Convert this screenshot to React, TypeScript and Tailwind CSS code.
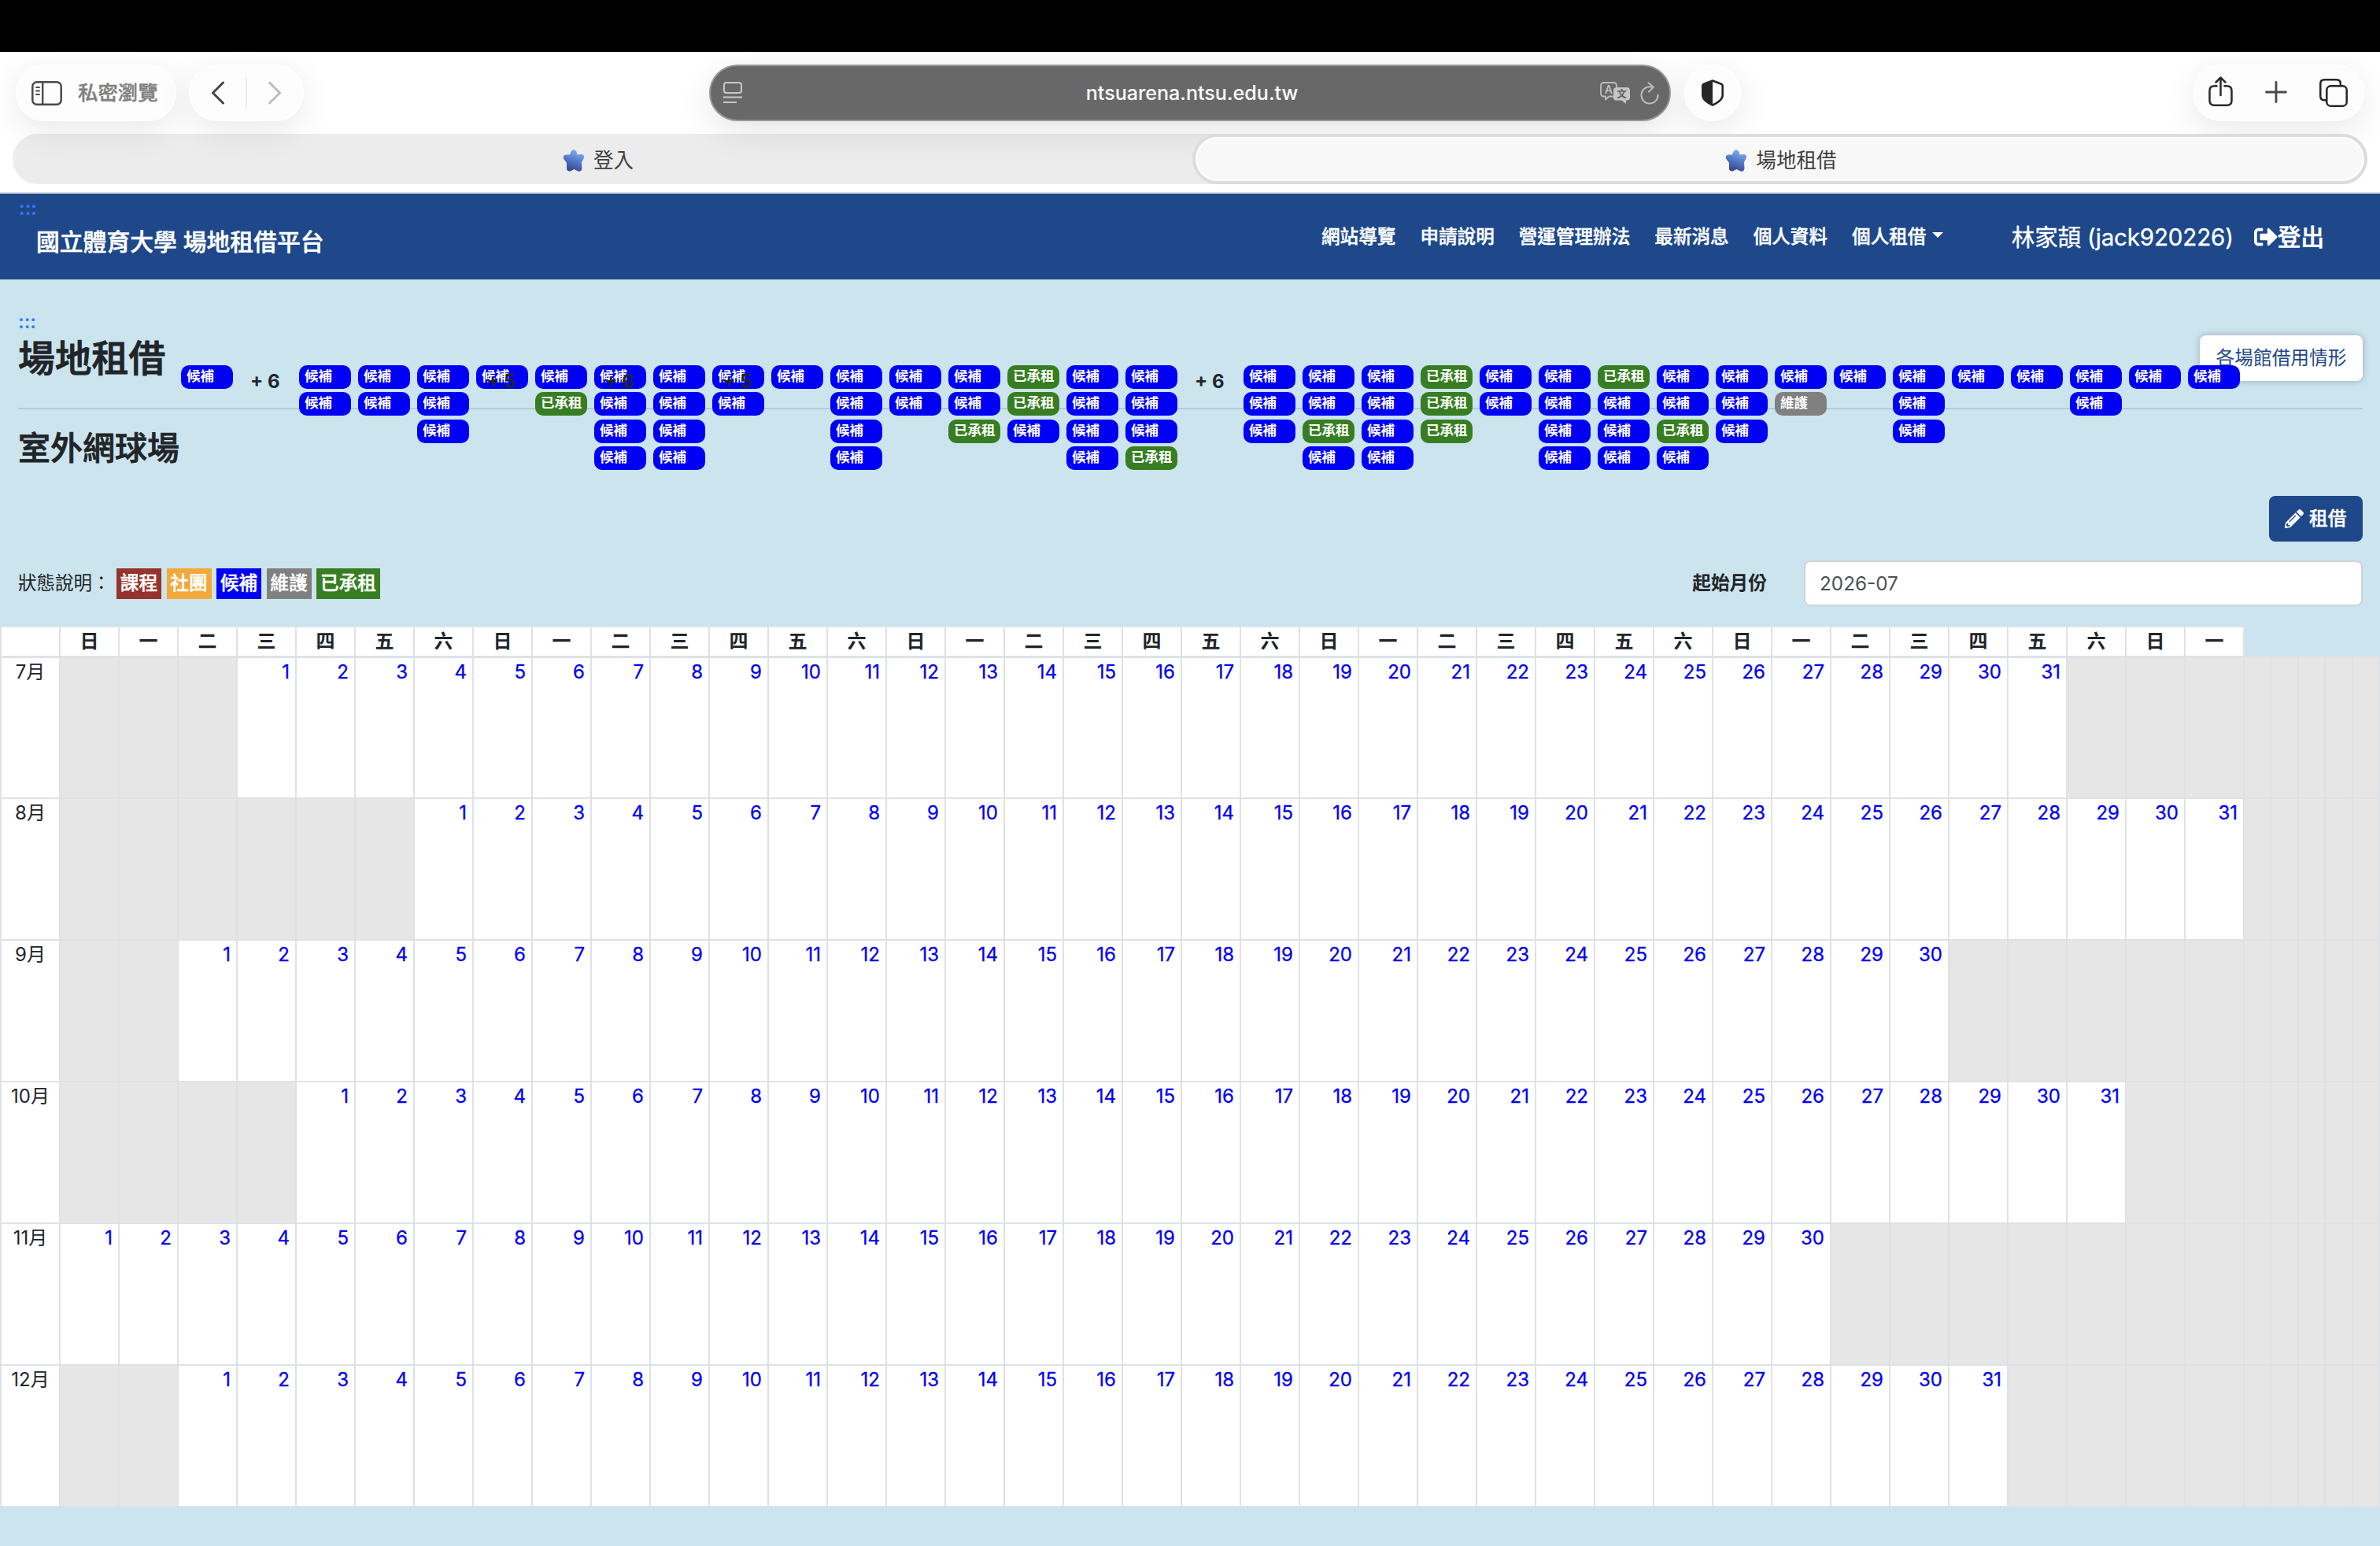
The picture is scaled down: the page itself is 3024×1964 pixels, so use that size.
import React from "react";
import { FaPencilAlt, FaSignOutAlt } from "react-icons/fa";

const WEEKDAYS = ["日", "一", "二", "三", "四", "五", "六"];
const DAY_COLUMNS = 37;

const MONTHS = [
  { label: "7月", offset: 3, days: 31 },
  { label: "8月", offset: 6, days: 31 },
  { label: "9月", offset: 2, days: 30 },
  { label: "10月", offset: 4, days: 31 },
  { label: "11月", offset: 0, days: 30 },
  { label: "12月", offset: 2, days: 31 },
];

type Kind = "w" | "r" | "m";

const EVENT_STYLE: Record<Kind, { text: string; className: string }> = {
  w: { text: "候補", className: "bg-[#0000f5]" },
  r: { text: "已承租", className: "bg-[#377e22]" },
  m: { text: "維護", className: "bg-[#808080]" },
};

const EVENTS: { items: string; more?: string }[] = [
  { items: "w" },
  { items: "", more: "+ 6" },
  { items: "ww" },
  { items: "ww" },
  { items: "www" },
  { items: "w", more: "+ 5" },
  { items: "wr" },
  { items: "wwww", more: "+ 6" },
  { items: "wwww" },
  { items: "ww", more: "+ 5" },
  { items: "w" },
  { items: "wwww" },
  { items: "ww" },
  { items: "wwr" },
  { items: "rrw" },
  { items: "wwww" },
  { items: "wwwr" },
  { items: "", more: "+ 6" },
  { items: "www" },
  { items: "wwrw" },
  { items: "wwww" },
  { items: "rrr" },
  { items: "ww" },
  { items: "wwww" },
  { items: "rwww" },
  { items: "wwrw" },
  { items: "www" },
  { items: "wm" },
  { items: "w" },
  { items: "www" },
  { items: "w" },
  { items: "w" },
  { items: "ww" },
  { items: "w" },
  { items: "w" },
];

const LEGEND = [
  { text: "課程", className: "w-[57px] bg-[#96332c]" },
  { text: "社團", className: "w-[57px] bg-[#f2a93b]" },
  { text: "候補", className: "w-[57px] bg-[#0000f5]" },
  { text: "維護", className: "w-[57px] bg-[#808080]" },
  { text: "已承租", className: "w-[81px] bg-[#377e22]" },
];

const PILL =
  "flex h-[72px] items-center rounded-full bg-[#fdfdfd] shadow-[0_12px_44px_rgba(0,0,0,0.09),inset_0_0_0_2px_#ffffff]";

function Star() {
  return (
    <svg width="28" height="28" viewBox="0 0 28 28">
      <defs>
        <linearGradient id="star" x1="0.7" y1="0" x2="0.35" y2="1">
          <stop offset="0" stopColor="#86b2f0" />
          <stop offset="0.45" stopColor="#5a7fcb" />
          <stop offset="1" stopColor="#34448f" />
        </linearGradient>
      </defs>
      <path
        d="M10.500 2.500q3.500-4.500 7 0l1 4 5.500-.5q4.500 1 2.500 5.500l-2.500 4.500.5 8q-.5 4.500-5 3.500l-5-2.500-5 2.500q-4.500.5-4.500-4l0-6.500-4-5.500q-1-4.500 3.500-5l4.500 0z"
        fill="url(#star)"
      />
    </svg>
  );
}

function Toolbar() {
  return (
    <div className="flex h-[104px] items-start pt-4 pl-5 pr-5">
      <div className={`${PILL} w-[204px] pl-5`}>
        <svg width="39" height="31" viewBox="0 0 39 31" fill="none" stroke="#4a4a4a">
          <rect x="1.3" y="1.3" width="36.4" height="28.4" rx="5.5" strokeWidth="2.5" />
          <path d="M14.2 1v29" strokeWidth="2.4" />
          <path d="M6 8h4M6 12.5h4M6 17h4" strokeWidth="1.8" strokeLinecap="round" />
        </svg>
        <span className="ml-5 text-[25.4px] font-medium leading-8 text-[#7f7f7f] [-webkit-text-stroke:0.4px]">私密瀏覽</span>
      </div>
      <div className={`${PILL} ml-4 w-[146px] pl-[28px]`}>
        <svg width="18" height="30" viewBox="0 0 18 30" fill="none" stroke="#454545" strokeWidth="3" strokeLinecap="round" strokeLinejoin="round">
          <path d="M15.5 2 2.5 15l13 13" />
        </svg>
        <span className="ml-[26px] h-10 w-[2px] bg-[#ececec]" />
        <svg className="ml-[26px]" width="18" height="30" viewBox="0 0 18 30" fill="none" stroke="#bcbcbc" strokeWidth="3" strokeLinecap="round" strokeLinejoin="round">
          <path d="M2.5 2l13 13-13 13" />
        </svg>
      </div>
      <div className="ml-[515px] flex h-[72px] w-[1222px] items-center rounded-full border-2 border-[#989898] bg-[#686868] pl-4 pr-[13px] shadow-[0_12px_44px_rgba(0,0,0,0.1)]">
        <svg width="24" height="28" viewBox="0 0 24 28" fill="none" stroke="#c9c9c9" strokeWidth="2">
          <rect x="1" y="1" width="22" height="13" rx="3" />
          <path d="M0 19.5h24M0 26h17" />
        </svg>
        <span className="flex-1 pl-[53px] text-center text-[25.1px] font-medium leading-8 text-white">
          ntsuarena.ntsu.edu.tw
        </span>
        <svg width="39" height="28" viewBox="0 0 39 28">
          <path
            d="M17 18.5h-5.5L7 22.5v-4H5q-4 0-4-4V5q0-4 4-4h12q4 0 4 4v2"
            fill="none"
            stroke="#bdbdbd"
            strokeWidth="1.8"
            strokeLinejoin="round"
          />
          <path d="M21 7h13q4 0 4 4v9q0 3.500-4 3.500h-1V28l-5.500-4.500H21q-4 0-4-3.500v-9q0-4 4-4z" fill="#c6c6c6" />
          <text x="11" y="14.800" fontSize="14" fontWeight="500" textAnchor="middle" fill="#c9c9c9">A</text>
          <text x="27.600" y="20" fontSize="12.500" fontWeight="700" textAnchor="middle" fill="#5c5c5c">文</text>
        </svg>
        <svg className="ml-3" width="24" height="29" viewBox="0 0 24 29" fill="none" stroke="#bdbdbd" strokeWidth="2" strokeLinecap="round" strokeLinejoin="round">
          <path d="M14 6.500A10.600 10.600 0 1 0 22.600 16.500" />
          <path d="M10.500 1.200l6.300 5.600-5.800 5.800" />
        </svg>
      </div>
      <div className={`${PILL} ml-[17px] w-[72px] justify-center`}>
        <svg width="28" height="34" viewBox="0 0 28 34">
          <path
            d="M14 1.500 3.500 5.500Q1.300 6.300 1.300 8.500V19q0 5 4 8.300 3.700 3.200 8.700 5.200 5-2 8.700-5.200 4-3.300 4-8.300V8.500q0-2.200-2.200-3z"
            fill="none"
            stroke="#262626"
            strokeWidth="2.600"
            strokeLinejoin="round"
          />
          <path d="M14 1.500 3.500 5.500Q1.300 6.300 1.300 8.500V19q0 5 4 8.300 3.700 3.200 8.700 5.200z" fill="#262626" />
        </svg>
      </div>
      <div className={`${PILL} ml-auto w-[218px] pl-[20px]`}>
        <svg className="-mt-[3px]" width="31" height="39" viewBox="0 0 31 39" fill="none" stroke="#2b2b2b" strokeWidth="2.500" strokeLinecap="round" strokeLinejoin="round">
          <path d="M10.500 12.300H7.500q-6 0-6 6v12.500q0 6 6 6h16q6 0 6-6V18.300q0-6-6-6h-3" />
          <path d="M15.500 24V2M9.500 7.500l6-6 6 6" />
        </svg>
        <svg className="ml-[41px] -mt-[2px]" width="28" height="28" viewBox="0 0 28 28" stroke="#4a4a4a" strokeWidth="2.800" strokeLinecap="round">
          <path d="M14 1.500v25M1.500 14h25" />
        </svg>
        <svg className="ml-[41px] -mt-[1px]" width="36" height="36" viewBox="0 0 36 36" fill="none" stroke="#262626" strokeWidth="2.500">
          <path d="M9 27.200H6.300q-5 0-5-5V6.300q0-5 5-5h15.500q5 0 5 5V9" />
          <rect x="9.300" y="9.300" width="25.400" height="25.400" rx="5" />
        </svg>
      </div>
    </div>
  );
}

function TabBar() {
  return (
    <div className="relative mx-4 flex h-[64px] rounded-full bg-black/[0.075] text-[25.600px] leading-8 text-[#3f3f3f]">
      <div className="flex w-[1499px] items-center justify-center gap-[11px] pr-[11px] pt-[4px]">
        <Star />
        <span>登入</span>
      </div>
      <div className="flex flex-1 items-center justify-center gap-[11px] rounded-full border-4 border-[#dcdcdc] bg-[#f8f8f8] pl-[3px] pt-[4px] shadow-[inset_0_0_0_2px_#ffffff]">
        <Star />
        <span>場地租借</span>
      </div>
    </div>
  );
}

function SiteHeader() {
  return (
    <header className="h-[109px] bg-[#1e488a] text-white">
      <div className="flex h-full pr-[71px]">
        <div className="w-[1679px]">
          <div className="h-[38px] pl-6 text-[24px] font-semibold leading-[38px] text-[#2f7dfa]">:::</div>
          <div className="pl-[46px] text-[29.800px] font-medium leading-[46px] [-webkit-text-stroke:0.5px]">國立體育大學 場地租借平台</div>
        </div>
        <nav className="flex h-[109px] items-center gap-[31px] text-[23.600px] font-medium leading-8 [-webkit-text-stroke:0.4px]">
          <a>網站導覽</a>
          <a>申請說明</a>
          <a>營運管理辦法</a>
          <a>最新消息</a>
          <a>個人資料</a>
          <a className="flex items-center gap-[8px]">
            個人租借
            <span className="-mt-1 border-x-[7px] border-t-[7px] border-x-transparent border-t-white" />
          </a>
        </nav>
        <div className="ml-auto flex items-center text-[29.600px] leading-10">
          <span className="w-[308px] whitespace-nowrap tracking-[-0.2px] [-webkit-text-stroke:0.3px]">林家頡 (jack920226)</span>
          <FaSignOutAlt className="h-[30px] w-[30px]" />
          <span className="font-medium [-webkit-text-stroke:0.5px]">登出</span>
        </div>
      </div>
    </header>
  );
}

function EventLayer() {
  return (
    <div className="absolute left-[230px] top-[109px] flex">
      {EVENTS.map((column, i) => (
        <div key={i} className="relative flex w-[75px] flex-col">
          {column.items.split("").map((kind, row) => {
            const style = EVENT_STYLE[kind as Kind];
            return (
              <div
                key={row}
                className={`${style.className} ${row === 1 ? "mb-[5px]" : "mb-1"} h-[30px] w-[66px] rounded-[10px] pl-[7px] text-[17.500px] font-bold leading-[28px] whitespace-nowrap text-white`}
              >
                {style.text}
              </div>
            );
          })}
          {column.more && (
            <span className="absolute left-[13px] top-[5px] text-[24px] font-bold leading-8 whitespace-nowrap text-[#212529]">
              {column.more}
            </span>
          )}
        </div>
      ))}
    </div>
  );
}

function MonthRow({ label, offset, days, first }: { label: string; offset: number; days: number; first: boolean }) {
  return (
    <div className={`${first ? "h-[179px]" : "h-[180px]"} flex border-b-2 border-r-2 border-[#dee2e6]`}>
      <div className="w-[75px] border-l-2 border-[#dee2e6] bg-white text-center text-[24px] leading-9 text-[#212529]">
        {label}
      </div>
      {Array.from({ length: DAY_COLUMNS }, (_, i) => {
        const day = i - offset + 1;
        const active = day >= 1 && day <= days;
        return (
          <div
            key={i}
            className={`${active ? "bg-white" : "bg-[#e6e6e6]"} w-[75px] border-l-2 border-[#dee2e6] pr-[7px] text-right text-[24px] leading-9 text-[#0000f5] [-webkit-text-stroke:0.3px]`}
          >
            {active ? day : ""}
          </div>
        );
      })}
      {[0, 1, 2, 3, 4].map((i) => (
        <div key={i} className="flex-1 border-l-2 border-[#dee2e6] bg-[#e6e6e6]" />
      ))}
    </div>
  );
}

function Calendar() {
  return (
    <section>
      <div className="flex h-[41px] border-b-[3px] border-[#dee2e6]">
        <div className="flex border-r-2 border-t-2 border-[#dee2e6] bg-white">
          <div className="w-[75px] border-l-2 border-[#dee2e6]" />
          {Array.from({ length: DAY_COLUMNS }, (_, i) => (
            <div key={i} className="w-[75px] border-l-2 border-[#dee2e6] text-center text-[24px] font-bold leading-[35px] text-[#212529]">
              {WEEKDAYS[i % 7]}
            </div>
          ))}
        </div>
      </div>
      {MONTHS.map((month, i) => (
        <MonthRow key={month.label} {...month} first={i === 0} />
      ))}
    </section>
  );
}

export default function App() {
  return (
    <div className="flex h-[1964px] w-[3024px] flex-col overflow-hidden bg-[#cce4ee] font-['Inter','Noto_Sans_CJK_TC',sans-serif]">
      <div className="h-[66px] bg-black" />
      <div className="h-[180px] overflow-hidden border-b-2 border-[#dddddd] bg-white">
        <Toolbar />
        <TabBar />
      </div>
      <SiteHeader />
      <main className="relative flex-1 pt-9">
        <div className="pl-[23px] pr-[22px] text-[#212529]">
          <div className="h-[35px] text-[24px] font-semibold leading-[35px] text-[#2f7dfa]">:::</div>
          <div className="flex h-[58px] items-center justify-between">
            <h1 className="text-[46.800px] font-medium leading-[58px] [-webkit-text-stroke:1px]">場地租借</h1>
            <button className="h-[58px] w-[207px] rounded-lg bg-white text-[23.700px] leading-[56px] text-[#1e488a] shadow-[0_0_8px_rgba(0,0,0,0.25)]">
              各場館借用情形
            </button>
          </div>
          <div className="mt-[34px] h-[2px] bg-[#b4cbd6]" />
          <h2 className="mt-[25px] h-12 text-[41px] font-medium leading-[48px] [-webkit-text-stroke:0.8px]">室外網球場</h2>
          <div className="mt-[37px] flex justify-end">
            <button className="flex h-[58px] w-[119px] items-center rounded-lg bg-[#1e488a] pl-5 text-[23.700px] font-medium text-white">
              <FaPencilAlt className="h-6 w-6" />
              <span className="ml-[7px] leading-[56px] [-webkit-text-stroke:0.4px]">租借</span>
            </button>
          </div>
          <div className="mt-6 flex h-[58px] items-center">
            <span className="w-[125px] whitespace-nowrap text-[23.500px] leading-8">狀態說明：</span>
            <div className="flex gap-[6.500px]">
              {LEGEND.map((item) => (
                <span key={item.text} className={`${item.className} h-[39px] whitespace-nowrap text-center text-[23.700px] font-medium leading-[38px] text-white [-webkit-text-stroke:0.4px]`}>
                  {item.text}
                </span>
              ))}
            </div>
            <span className="ml-auto mr-[47px] text-[23.700px] font-bold leading-[34px]">起始月份</span>
            <div className="h-[58px] w-[710px] rounded-lg border-2 border-[#ced4da] bg-white pl-[18px] text-[24.300px] leading-[55px] text-[#495057]">
              2026-07
            </div>
          </div>
        </div>
        <div className="mt-[25px]">
          <Calendar />
        </div>
        <EventLayer />
      </main>
    </div>
  );
}
